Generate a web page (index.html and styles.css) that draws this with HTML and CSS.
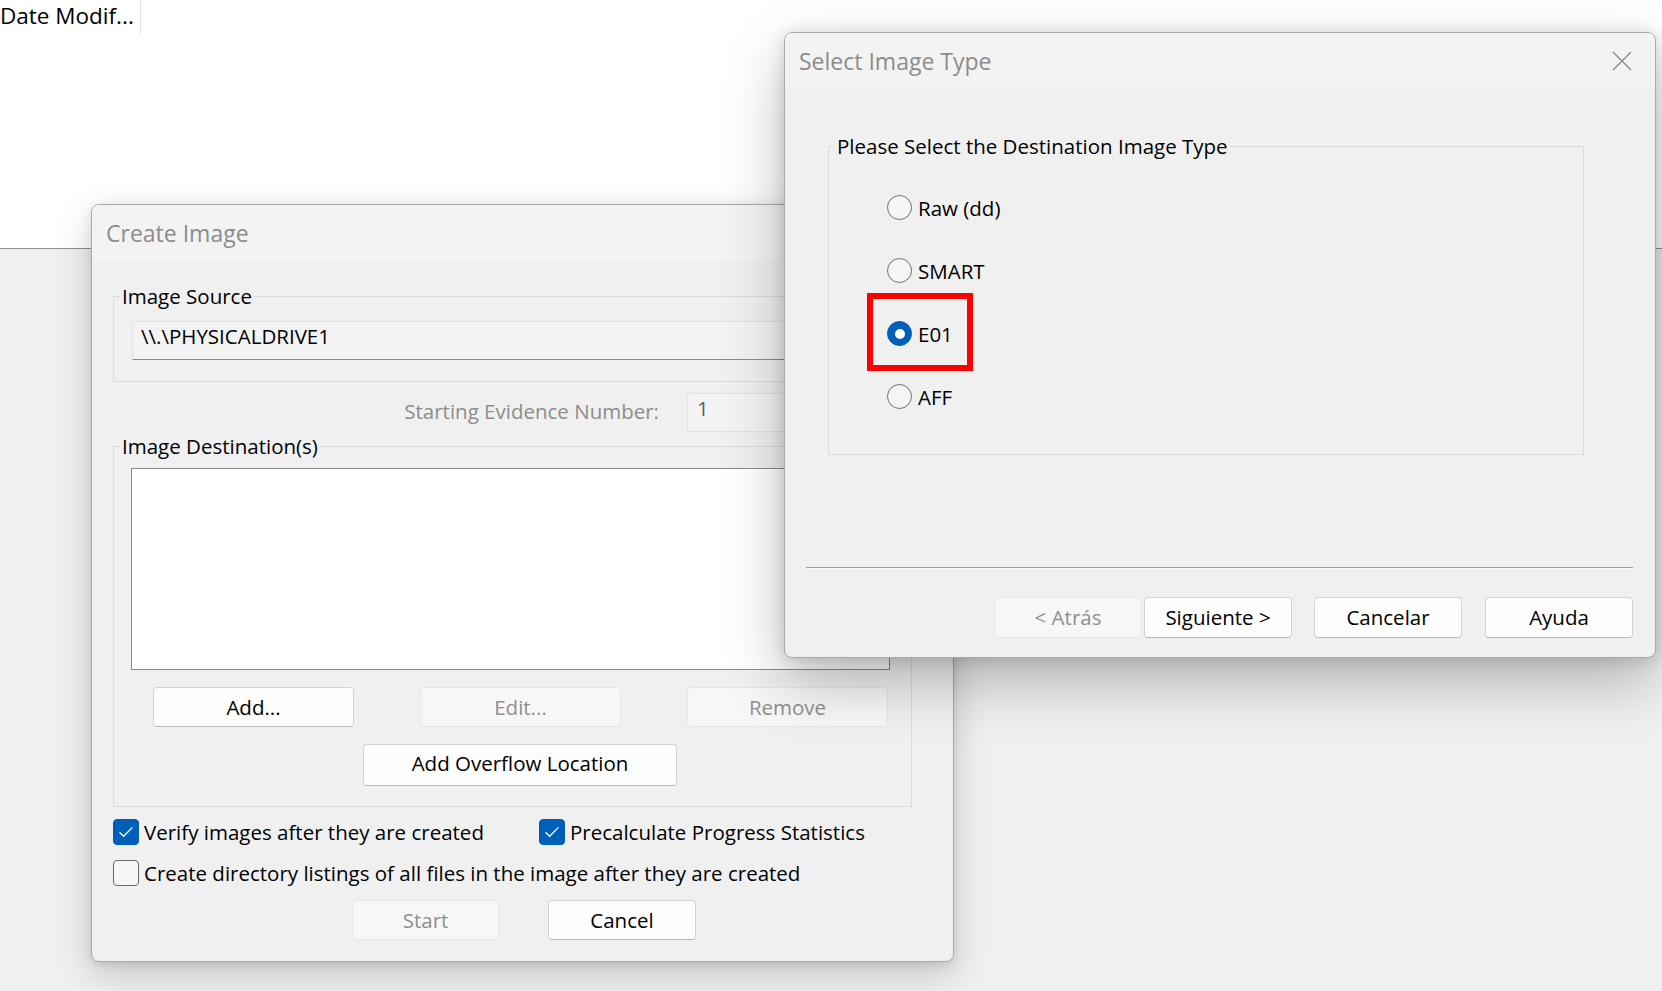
FILE: index.html
```html
<!DOCTYPE html>
<html lang="en">
<head>
<meta charset="utf-8">
<title>Create Image - Select Image Type</title>
<link rel="stylesheet" href="styles.css">
</head>
<body>
<div class="app">
  <div class="file-list">
    <div class="list-header">
      <div class="col-head">Date Modif...</div>
    </div>
  </div>
  <div class="app-lower"></div>
</div>

<section class="dialog create">
  <header class="titlebar"><span class="title">Create Image</span></header>
  <div class="dialog-body">
    <fieldset class="group src">
      <legend>Image Source</legend>
      <div class="src-inner">
        <div class="field wide">\\.\PHYSICALDRIVE1</div>
      </div>
    </fieldset>
    <div class="evidence">
      <span class="muted">Starting Evidence Number:</span>
      <div class="field small">1</div>
    </div>
    <fieldset class="group dst">
      <legend>Image Destination(s)</legend>
      <div class="dst-inner">
        <div class="listbox"></div>
        <div class="btn-row">
          <button class="btn">Add...</button>
          <button class="btn disabled">Edit...</button>
          <button class="btn disabled">Remove</button>
        </div>
        <div class="overflow-row">
          <button class="btn overflow">Add Overflow Location</button>
        </div>
      </div>
    </fieldset>
    <div class="checks">
      <div class="check-row">
        <label class="check first"><span class="box on"><svg viewBox="0 0 26 26" width="26" height="26"><path d="M6.5 13.2 L10.6 17.3 L19.5 8.4" fill="none" stroke="#fff" stroke-width="1.3"/></svg></span>Verify images after they are created</label>
        <label class="check"><span class="box on"><svg viewBox="0 0 26 26" width="26" height="26"><path d="M6.5 13.2 L10.6 17.3 L19.5 8.4" fill="none" stroke="#fff" stroke-width="1.3"/></svg></span>Precalculate Progress Statistics</label>
      </div>
      <div class="check-row second">
        <label class="check"><span class="box"></span>Create directory listings of all files in the image after they are created</label>
      </div>
    </div>
    <div class="actions">
      <button class="btn disabled start">Start</button>
      <button class="btn cancel">Cancel</button>
    </div>
  </div>
</section>

<section class="dialog select">
  <header class="titlebar">
    <span class="title">Select Image Type</span>
    <svg class="close" viewBox="0 0 20 20" width="20" height="20"><path d="M1 1 L19 19 M19 1 L1 19" stroke="#8a8a8a" stroke-width="1.4" fill="none"/></svg>
  </header>
  <div class="dialog-body">
    <fieldset class="group type-group">
      <legend>Please Select the Destination Image Type</legend>
      <div class="type-inner">
        <div class="radio-row"><label class="radio"><span class="dot"></span>Raw (dd)</label></div>
        <div class="radio-row"><label class="radio"><span class="dot"></span>SMART</label></div>
        <div class="radio-row"><label class="radio"><span class="dot on"></span>E01<span class="highlight"></span></label></div>
        <div class="radio-row"><label class="radio"><span class="dot"></span>AFF</label></div>
      </div>
    </fieldset>
    <div class="separator"></div>
    <div class="wizard-btns">
      <button class="btn disabled back">&lt; Atrás</button>
      <button class="btn next">Siguiente &gt;</button>
      <button class="btn cancelar">Cancelar</button>
      <button class="btn">Ayuda</button>
    </div>
  </div>
</section>
</body>
</html>
```

FILE: styles.css
```css
* { box-sizing: border-box; }
html, body { margin: 0; padding: 0; }
body {
  width: 1662px;
  height: 991px;
  overflow: hidden;
  position: relative;
  font-family: "Open Sans", "Noto Sans", sans-serif;
  font-size: 20.5px;
  line-height: 28px;
  color: #000;
  background: #f0f0f0;
}

/* background application */
.app { height: 991px; display: flex; flex-direction: column; }
.file-list {
  flex: none;
  height: 249px;
  background: #fff;
  border-bottom: 1px solid #8e8e8e;
}
.list-header { display: flex; height: 35px; }
.col-head {
  width: 141px;
  border-right: 1px solid #e5e5e5;
  padding-top: 1px;
  font-size: 22.5px;
  line-height: 30px;
  white-space: nowrap;
  overflow: hidden;
}
.app-lower { flex: 1; background: #f0f0f0; }

/* dialogs (windows on the desktop) */
.dialog {
  position: absolute;
  display: flex;
  flex-direction: column;
  background: #f0f0f0;
  border: 1px solid #a9a9a9;
  border-radius: 8px;
  overflow: hidden;
}
.create {
  left: 91px; top: 204px; width: 863px; height: 758px;
  box-shadow: 0 12px 36px rgba(0,0,0,.19), 0 2px 8px rgba(0,0,0,.10);
}
.select {
  left: 784px; top: 32px; width: 872px; height: 626px;
  box-shadow: 0 24px 60px rgba(0,0,0,.26), 0 2px 16px rgba(0,0,0,.14);
}
.titlebar {
  flex: none;
  height: 56px;
  background: #f3f3f3;
  display: flex;
  align-items: center;
  justify-content: space-between;
  padding: 0 23px 0 14px;
  font-size: 23px;
  line-height: 31px;
  color: #8c8c8c;
}
.close { display: block; }
.dialog-body { flex: 1; }

/* group boxes */
.group {
  margin: 0;
  padding: 0;
  min-width: 0;
  border: 1px solid #dcdcdc;
}
.group legend {
  margin-left: 6px;
  padding: 0 2px;
  line-height: 28px;
}

/* text fields */
.field {
  height: 39px;
  background: #f3f3f3;
  border: 1px solid #e3e3e3;
  border-bottom-color: #8b8b8b;
  border-radius: 3px 3px 0 0;
  padding-left: 8px;
  line-height: 28px;
  white-space: nowrap;
}

/* Create Image */
.src { margin: 21px 0 0 21px; width: 798px; }
.src-inner { padding: 11px 0 21px 18px; }
.field.wide { width: 758px; }

.evidence {
  display: flex;
  justify-content: flex-end;
  align-items: center;
  gap: 28px;
  margin: 11px 0 0 21px;
  width: 776px;
  height: 39px;
}
.muted { color: #8d8d8d; margin-bottom: 4px; }
.field.small {
  width: 202px;
  padding-left: 9px;
  color: #5e5e5e;
  border-bottom-color: #e3e3e3;
}

.dst { margin: 0 0 0 21px; width: 799px; }
.dst-inner { padding: 8px 0 20px 17px; }
.listbox {
  width: 759px;
  height: 202px;
  background: #fff;
  border: 1px solid #8a8a8a;
}
.btn-row {
  display: grid;
  grid-template-columns: repeat(3, 201px);
  column-gap: 66px;
  margin: 17px 0 0 22px;
}
.overflow-row { margin: 17px 0 0 232px; }

.btn {
  display: block;
  height: 40px;
  margin: 0;
  padding: 0;
  font: inherit;
  line-height: 28px;
  color: #000;
  background: #fdfdfd;
  border: 1px solid #d3d3d3;
  border-bottom-color: #b9b9b9;
  border-radius: 4px;
  text-align: center;
}
.btn.disabled {
  background: #f7f7f7;
  border-color: #e6e6e6;
  color: #8f8f8f;
}
.btn.overflow { width: 314px; height: 42px; padding-bottom: 4px; }

.checks { margin: 12px 0 0 21px; }
.check-row { display: flex; align-items: center; height: 26px; }
.check-row.second { margin-top: 15px; }
.check { display: flex; align-items: center; gap: 5px; white-space: nowrap; }
.check.first { width: 426px; }
.box {
  flex: none;
  width: 26px;
  height: 26px;
  border: 1px solid #6a6a6a;
  border-radius: 4px;
  background: #f6f6f6;
}
.box.on { background: #005fb8; border-color: #005fb8; }
.box svg { display: block; margin: -1px; }

.actions {
  display: flex;
  gap: 49px;
  margin: 14px 0 0 260px;
}
.actions .start { width: 147px; }
.actions .cancel { width: 148px; }

/* Select Image Type */
.type-group { margin: 43px 0 0 43px; width: 756px; }
.type-inner { padding: 16px 0 26px 58px; }
.radio-row { height: 63px; display: flex; align-items: center; }
.radio { position: relative; display: inline-flex; align-items: center; gap: 6px; }
.dot {
  flex: none;
  width: 25px;
  height: 25px;
  border-radius: 50%;
  border: 1px solid #6f6f6f;
  background: #f5f5f5;
  display: flex;
  align-items: center;
  justify-content: center;
}
.dot.on { background: #005fb8; border-color: #005fb8; }
.dot.on::after {
  content: "";
  width: 10px;
  height: 10px;
  border-radius: 50%;
  background: #fff;
}
.highlight {
  position: absolute;
  left: -20px;
  top: 50%;
  margin-top: -41px;
  width: 106px;
  height: 78px;
  border: 6px solid #ff0000;
}

.separator {
  margin: 112px 22px 0 21px;
  height: 2px;
  border-top: 1px solid #a0a0a0;
  border-bottom: 1px solid #fbfbfb;
}
.wizard-btns {
  display: flex;
  justify-content: flex-end;
  margin: 28px 22px 0 0;
}
.wizard-btns .btn { width: 148px; height: 41px; padding-bottom: 2px; }
.wizard-btns .back { margin-right: 2px; }
.wizard-btns .next { margin-right: 22px; }
.wizard-btns .cancelar { margin-right: 23px; }
```
